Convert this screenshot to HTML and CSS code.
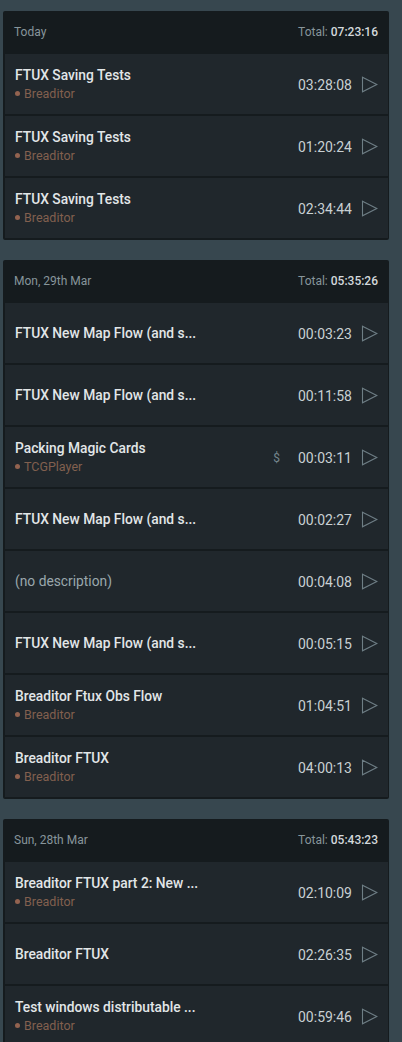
FILE: index.html
```html
<!DOCTYPE html>
<html>
<head>
<meta charset="utf-8">
<link rel="stylesheet" href="styles.css">
</head>
<body>
<svg width="0" height="0" class="defs">
  <symbol id="play" viewBox="0 0 17 17"><path d="M1.5 1.2 L15.8 8.5 L1.5 15.8 Z" fill="none" stroke="currentColor" stroke-width="1.1" stroke-linejoin="miter"/></symbol>
</svg>
<div class="list">
  <section class="day">
    <header class="day-head"><span>Today</span><span class="total">Total: <b>07:23:16</b></span></header>
    <div class="entry"><div class="info"><div class="title">FTUX Saving Tests</div><div class="project"><i class="dot"></i>Breaditor</div></div><span class="time">03:28:08</span><svg class="play"><use href="#play"/></svg></div>
    <div class="entry"><div class="info"><div class="title">FTUX Saving Tests</div><div class="project"><i class="dot"></i>Breaditor</div></div><span class="time">01:20:24</span><svg class="play"><use href="#play"/></svg></div>
    <div class="entry"><div class="info"><div class="title">FTUX Saving Tests</div><div class="project"><i class="dot"></i>Breaditor</div></div><span class="time">02:34:44</span><svg class="play"><use href="#play"/></svg></div>
  </section>
  <section class="day">
    <header class="day-head"><span>Mon, 29th Mar</span><span class="total">Total: <b>05:35:26</b></span></header>
    <div class="entry"><div class="info"><div class="title">FTUX New Map Flow (and s...</div></div><span class="time">00:03:23</span><svg class="play"><use href="#play"/></svg></div>
    <div class="entry"><div class="info"><div class="title">FTUX New Map Flow (and s...</div></div><span class="time">00:11:58</span><svg class="play"><use href="#play"/></svg></div>
    <div class="entry"><div class="info"><div class="title">Packing Magic Cards</div><div class="project"><i class="dot"></i>TCGPlayer</div></div><span class="billable">$</span><span class="time">00:03:11</span><svg class="play"><use href="#play"/></svg></div>
    <div class="entry"><div class="info"><div class="title">FTUX New Map Flow (and s...</div></div><span class="time">00:02:27</span><svg class="play"><use href="#play"/></svg></div>
    <div class="entry"><div class="info"><div class="title empty">(no description)</div></div><span class="time">00:04:08</span><svg class="play"><use href="#play"/></svg></div>
    <div class="entry"><div class="info"><div class="title">FTUX New Map Flow (and s...</div></div><span class="time">00:05:15</span><svg class="play"><use href="#play"/></svg></div>
    <div class="entry"><div class="info"><div class="title">Breaditor Ftux Obs Flow</div><div class="project"><i class="dot"></i>Breaditor</div></div><span class="time">01:04:51</span><svg class="play"><use href="#play"/></svg></div>
    <div class="entry"><div class="info"><div class="title">Breaditor FTUX</div><div class="project"><i class="dot"></i>Breaditor</div></div><span class="time">04:00:13</span><svg class="play"><use href="#play"/></svg></div>
  </section>
  <section class="day">
    <header class="day-head"><span>Sun, 28th Mar</span><span class="total">Total: <b>05:43:23</b></span></header>
    <div class="entry"><div class="info"><div class="title">Breaditor FTUX part 2: New ...</div><div class="project"><i class="dot"></i>Breaditor</div></div><span class="time">02:10:09</span><svg class="play"><use href="#play"/></svg></div>
    <div class="entry"><div class="info"><div class="title">Breaditor FTUX</div></div><span class="time">02:26:35</span><svg class="play"><use href="#play"/></svg></div>
    <div class="entry"><div class="info"><div class="title">Test windows distributable ...</div><div class="project"><i class="dot"></i>Breaditor</div></div><span class="time">00:59:46</span><svg class="play"><use href="#play"/></svg></div>
  </section>
</div>
</body>
</html>
```
FILE: styles.css
```css
html, body {
  margin: 0;
  padding: 0;
  background: #37474f;
  height: 100%;
  overflow: hidden;
}
body {
  font-family: Roboto, "Liberation Sans", sans-serif;
}
.defs {
  position: absolute;
  width: 0;
  height: 0;
}
.list {
  display: flex;
  flex-direction: column;
  gap: 20px;
  padding: 11px 13px 0 3px;
}
.day {
  background: #151b1e;
  border-radius: 2px;
  display: flex;
  flex-direction: column;
  gap: 2px;
  padding: 0 1px 2px 2px;
}
.day-head {
  height: 41px;
  display: flex;
  align-items: center;
  justify-content: space-between;
  padding: 0 10px 0 9px;
  font-size: 12px;
  color: #87959b;
}
.total b {
  font-weight: 500;
  color: #d3d9dc;
}
.entry {
  height: 60px;
  background: #20272c;
  display: flex;
  align-items: center;
  padding: 0 10px;
}
.info {
  flex: 1;
  min-width: 0;
  display: flex;
  flex-direction: column;
  gap: 2px;
}
.title {
  font-size: 13.8px;
  font-weight: 500;
  color: #e2e6e8;
  white-space: nowrap;
  line-height: 17px;
}
.title.empty {
  font-weight: 400;
  color: #9aa7ac;
}
.project {
  display: flex;
  align-items: center;
  font-size: 12.5px;
  line-height: 16px;
  color: #82604f;
}
.dot {
  width: 5px;
  height: 5px;
  border-radius: 50%;
  background: #936350;
  margin-right: 4px;
}
.billable {
  font-size: 12px;
  color: #76868c;
  margin-right: 18px;
  margin-top: 1px;
}
.time {
  font-size: 14px;
  color: #c8d0d3;
  margin-top: 2px;
}
.play {
  width: 17px;
  height: 17px;
  margin-left: 9px;
  color: #6e7e85;
}
```
